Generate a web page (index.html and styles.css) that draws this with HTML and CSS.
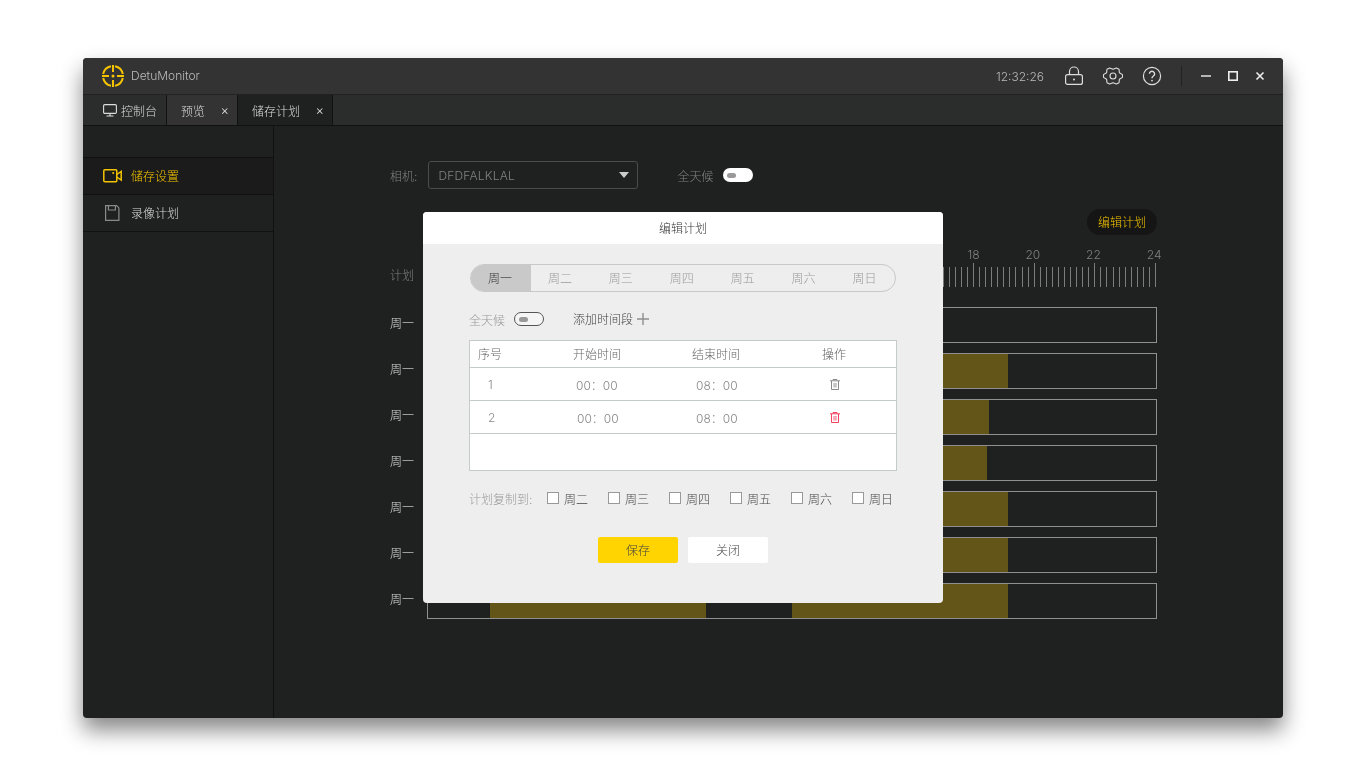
FILE: index.html
```html
<!DOCTYPE html>
<html lang="zh-CN">
<head>
    <meta charset="UTF-8">
    <title>DetuMonitor</title>
    <link rel="stylesheet" href="styles.css">
</head>
<body>
<div class="window">
    <!-- title bar -->
    <header class="titlebar">
        <svg class="logo" width="22" height="22" viewBox="0 0 22 22" fill="none" stroke="#f5c400" stroke-width="2">
            <path d="M9 1.2A10 10 0 0 0 1.2 9M13 1.2A10 10 0 0 1 20.8 9M1.2 13A10 10 0 0 0 9 20.8M20.8 13A10 10 0 0 1 13 20.8"/>
            <path d="M11 0V7M11 15V22M0 11H7M15 11H22"/>
            <circle cx="11" cy="11" r="1.5" fill="#f5c400" stroke="none"/>
        </svg>
        <span class="app-name">DetuMonitor</span>
        <span class="clock">12:32:26</span>
        <svg class="tool" width="20" height="20" viewBox="0 0 20 20" fill="none" stroke="#ddd" stroke-width="1.2">
            <rect x="1.6" y="8.6" width="16.8" height="9.8" rx="2"/>
            <path d="M5.5 8.5V5.5a4.5 4.5 0 0 1 9 0v3"/>
            <circle cx="10" cy="13.5" r="1" fill="#ddd" stroke="none"/>
        </svg>
        <svg class="tool" width="20" height="20" viewBox="0 0 20 20" fill="none" stroke="#ddd" stroke-width="1.1" stroke-linejoin="round">
            <path d="M19.5 8.65V11.35L16.4 13.33 16 16.7 13.4 18.07 10 16.66 6.6 18.07 4 16.7 3.6 13.33 .5 11.35V8.65L3.6 6.67 4 3.3 6.6 1.93 10 3.34 13.4 1.93 16 3.3 16.4 6.67z"/>
            <circle cx="10" cy="10" r="3"/>
        </svg>
        <svg class="tool" width="20" height="20" viewBox="0 0 20 20" fill="none" stroke="#ddd" stroke-width="1.2">
            <circle cx="10" cy="10" r="8.6"/>
            <path d="M7.4 7.8a2.6 2.6 0 1 1 4 2.2c-.9.6-1.4 1-1.4 2.2" stroke-width="1.4"/>
            <circle cx="10" cy="14.6" r=".9" fill="#ddd" stroke="none"/>
        </svg>
        <i class="divider"></i>
        <svg class="win-btn" width="10" height="10" viewBox="0 0 10 10" fill="none" stroke="#eee" stroke-width="1.4"><path d="M0 5H10"/></svg>
        <svg class="win-btn" width="10" height="10" viewBox="0 0 10 10" fill="none" stroke="#eee" stroke-width="1.6"><rect x=".8" y=".8" width="8.4" height="8.4"/></svg>
        <svg class="win-btn" width="10" height="10" viewBox="0 0 10 10" fill="none" stroke="#eee" stroke-width="1.6"><path d="M1.5 1.5L8.5 8.5M8.5 1.5L1.5 8.5"/></svg>
    </header>

    <!-- tabs -->
    <nav class="tabs">
        <div class="tab tab-home">
            <svg width="14" height="14" viewBox="0 0 14 14" fill="none" stroke="#ddd" stroke-width="1.1">
                <rect x=".6" y="1.6" width="12.8" height="8.8" rx="1.2"/>
                <path d="M7 10.5V13M3.5 13H10.5"/>
            </svg>
            控制台
        </div>
        <div class="tab tab-preview">预览<span class="tab-close">×</span></div>
        <div class="tab tab-plan">储存计划<span class="tab-close">×</span></div>
    </nav>

    <div class="body">
        <aside class="sidebar">
            <div class="side-item side-item-active">
                <svg width="19" height="14" viewBox="0 0 19 14" fill="none" stroke="#f5c400" stroke-width="1.5">
                    <rect x=".8" y=".8" width="13" height="12" rx="1"/>
                    <path d="M13.8 5.5L18.2 2.5V11L13.8 8"/>
                    <circle cx="10.2" cy="4" r="1" fill="#f5c400" stroke="none"/>
                </svg>
                <span class="side-label">储存设置</span>
            </div>
            <div class="side-item">
                <svg width="19" height="16" viewBox="0 0 19 16" fill="none" stroke="#8a8a8a" stroke-width="1.2">
                    <path d="M2.6.6H13.6L15.9 2.9V15.4H2.6z"/>
                    <path d="M5.4.8V5H12.4V.8"/>
                </svg>
                <span class="side-label">录像计划</span>
            </div>
        </aside>

        <main class="panel">
            <div class="filter-row">
                <span class="muted">相机:</span>
                <div class="select">DFDFALKLAL<i class="caret"></i></div>
                <span class="muted allday">全天候</span>
                <span class="toggle toggle-light"><i></i></span>
            </div>
            <div class="edit-row"><span class="edit-btn">编辑计划</span></div>
            <div class="ruler-row">
                <span class="muted ruler-title">计划</span>
                <div class="ruler">
                    <div class="hours"><span>18</span><span>20</span><span>22</span><span>24</span></div>
                    <div class="ticks"></div>
                </div>
            </div>
            <div class="rows">
                <div class="row"><span>周一</span><div class="track"></div></div>
                <div class="row"><span>周一</span><div class="track"><i class="fill" style="left:363px;width:217px"></i></div></div>
                <div class="row"><span>周一</span><div class="track"><i class="fill" style="left:363px;width:198px"></i></div></div>
                <div class="row"><span>周一</span><div class="track"><i class="fill" style="left:363px;width:196px"></i></div></div>
                <div class="row"><span>周一</span><div class="track"><i class="fill" style="left:363px;width:217px"></i></div></div>
                <div class="row"><span>周一</span><div class="track"><i class="fill" style="left:363px;width:217px"></i></div></div>
                <div class="row"><span>周一</span><div class="track"><i class="fill" style="left:62px;width:216px"></i><i class="fill" style="left:364px;width:216px"></i></div></div>
            </div>
        </main>
    </div>

    <!-- edit dialog -->
    <section class="dialog">
        <h2 class="dialog-title">编辑计划</h2>
        <div class="dialog-body">
            <div class="days">
                <span class="day day-active">周一</span>
                <span class="day">周二</span>
                <span class="day">周三</span>
                <span class="day">周四</span>
                <span class="day">周五</span>
                <span class="day">周六</span>
                <span class="day">周日</span>
            </div>
            <div class="add-row">
                <span class="grey">全天候</span>
                <span class="toggle toggle-outline"><i></i></span>
                <span class="add-time">添加时间段</span>
                <svg width="12" height="12" viewBox="0 0 12 12" stroke="#8e8e8e" stroke-width="1.4"><path d="M6 0V12M0 6H12"/></svg>
            </div>
            <div class="table">
                <div class="tr tr-head">
                    <span class="seq">序号</span><span>开始时间</span><span>结束时间</span><span>操作</span>
                </div>
                <div class="tr">
                    <span class="num">1</span><span class="time">00：00</span><span class="time">08：00</span>
                    <span><svg class="trash" width="10" height="11" viewBox="0 0 10 11" fill="none" stroke="#8a8a8a" stroke-width="1"><path d="M0 1.8H10M3 1.5V.5H7V1.5M1.5 2V10.5H8.5V2"/><rect x="3.2" y="4" width="3.6" height="4.5" fill="#c4c4c4" stroke="none"/></svg></span>
                </div>
                <div class="tr">
                    <span class="num">2</span><span class="time time-shift">00：00</span><span class="time">08：00</span>
                    <span><svg class="trash" width="10" height="11" viewBox="0 0 10 11" fill="none" stroke="#f5405f" stroke-width="1"><path d="M0 1.8H10M3 1.5V.5H7V1.5M1.5 2V10.5H8.5V2"/><rect x="3.2" y="4" width="3.6" height="4.5" fill="#fba4b2" stroke="none"/></svg></span>
                </div>
            </div>
            <div class="copy-row">
                <span class="grey copy-label">计划复制到:</span>
                <label class="check"><i></i>周二</label>
                <label class="check"><i></i>周三</label>
                <label class="check"><i></i>周四</label>
                <label class="check"><i></i>周五</label>
                <label class="check"><i></i>周六</label>
                <label class="check"><i></i>周日</label>
            </div>
            <div class="actions">
                <button class="btn btn-save">保存</button>
                <button class="btn">关闭</button>
            </div>
        </div>
    </section>
</div>
</body>
</html>
```

FILE: styles.css
```css
* {
    box-sizing: border-box;
}

body {
    margin: 0;
    height: 768px;
    padding: 58px 83px 0;
    overflow: hidden;
    background-color: #fff;
    font-family: Inter, "Noto Sans CJK SC", sans-serif;
    font-size: 12px;
    font-weight: 300;
    color: #ccc;
}

.window {
    position: relative;
    width: 1200px;
    height: 660px;
    display: flex;
    flex-direction: column;
    border-radius: 4px;
    background-color: #1f2120;
    box-shadow: 0 12px 22px rgba(0, 0, 0, 0.48);
    will-change: transform;
}

/* title bar */
.titlebar {
    height: 37px;
    flex: none;
    display: flex;
    align-items: center;
    padding: 0 18px 0 19px;
    background-color: #333;
    border-bottom: 1px solid #222;
    border-radius: 4px 4px 0 0;
}

.app-name {
    margin-left: 7px;
    margin-bottom: 1px;
    color: #bbb;
}

.clock {
    margin-left: auto;
    color: #bbb;
}

.tool {
    margin-left: 19px;
}

.clock + .tool {
    margin-left: 20px;
}

.divider {
    width: 1px;
    height: 20px;
    margin: 0 19px;
    background-color: #222;
}

.win-btn {
    margin-right: 17px;
}

.win-btn:last-child {
    margin-right: 0;
}

/* tabs */
.tabs {
    height: 31px;
    flex: none;
    display: flex;
    background-color: #2b2d2c;
    border-bottom: 1px solid #111;
}

.tab {
    display: flex;
    align-items: center;
    padding-left: 14px;
    color: #ddd;
    border-right: 1px solid #111;
}

.tab-home {
    width: 84px;
    padding-left: 20px;
    gap: 4px;
}

.tab-preview {
    width: 71px;
    background-color: #333;
}

.tab-plan {
    width: 95px;
    background-color: #1f2120;
}

.tab-close {
    margin-left: auto;
    margin-right: 8px;
    font-size: 13px;
    color: #ddd;
}

.body {
    flex: 1;
    display: flex;
    min-height: 0;
}

/* sidebar */
.sidebar {
    width: 191px;
    flex: none;
    padding-top: 31px;
    border-right: 1px solid #111;
}

.side-item {
    height: 37px;
    display: flex;
    align-items: center;
    gap: 9px;
    padding-left: 20px;
    color: #ddd;
    border-bottom: 1px solid #111;
}

.side-label {
    margin-bottom: 1px;
}

.side-item-active {
    color: #f5c400;
    background-color: #1a1b1a;
    border-top: 1px solid #111;
    height: 38px;
}

/* main panel */
.panel {
    flex: 1;
    padding: 35px 126px 0 116px;
}

.muted {
    color: #808080;
}

.filter-row {
    height: 28px;
    display: flex;
    align-items: center;
}

.select {
    position: relative;
    width: 210px;
    height: 28px;
    margin-left: 11px;
    padding-left: 9px;
    line-height: 28px;
    letter-spacing: 0.2px;
    color: #808080;
    border: 1px solid #4a4c4b;
    border-radius: 3px;
}

.caret {
    position: absolute;
    top: 10px;
    right: 8px;
    border-left: 5px solid transparent;
    border-right: 5px solid transparent;
    border-top: 6px solid #ccc;
}

.allday {
    margin-left: 39px;
    margin-right: 1px;
}

.toggle {
    width: 30px;
    height: 14px;
    margin-left: 9px;
    display: flex;
    align-items: center;
    padding-left: 4px;
    border-radius: 7px;
}

.toggle i {
    width: 9px;
    height: 5px;
    border-radius: 3px;
    background-color: #999;
}

.toggle-light {
    background-color: #fff;
}

.toggle-outline {
    border: 1px solid #555;
    background-color: #f5f5f5;
}

.edit-row {
    height: 26px;
    margin-top: 20px;
    display: flex;
    justify-content: flex-end;
}

.edit-btn {
    width: 70px;
    height: 26px;
    line-height: 28px;
    text-align: center;
    color: #f5c400;
    background-color: #141514;
    border-radius: 13px;
}

.ruler-row {
    height: 40px;
    margin-top: 12px;
    display: flex;
    justify-content: space-between;
}

.ruler-title {
    margin-top: 19px;
}

.ruler {
    width: 730px;
}

.hours {
    height: 16px;
    display: flex;
    justify-content: flex-end;
    margin-right: -4.5px;
    color: #808080;
}

.hours span {
    width: 60.67px;
    text-align: right;
}

.ticks {
    width: 729px;
    height: 24px;
    background:
        repeating-linear-gradient(to left, #7c7c7c 0 1px, transparent 1px 6.0667px) bottom / 100% 20px no-repeat,
        repeating-linear-gradient(to left, #7c7c7c 0 1px, transparent 1px 60.667px) bottom / 100% 24px no-repeat;
}

.rows {
    margin-top: 20px;
    display: flex;
    flex-direction: column;
    gap: 10px;
}

.row {
    height: 36px;
    display: flex;
    justify-content: space-between;
    color: #ddd;
}

.row span {
    line-height: 34px;
}

.track {
    position: relative;
    width: 730px;
    border: 1px solid #8f8f8f;
}

.fill {
    position: absolute;
    top: 0;
    bottom: 0;
    background-color: #635518;
}

/* dialog */
.dialog {
    position: absolute;
    left: 340px;
    top: 154px;
    width: 520px;
    height: 391px;
    border-radius: 4px;
    overflow: hidden;
    background-color: #eee;
    color: #666;
}

.dialog-title {
    height: 32px;
    margin: 0;
    line-height: 33px;
    text-align: center;
    font-size: 12px;
    font-weight: 300;
    color: #333;
    background-color: #fff;
}

.dialog-body {
    padding: 20px 46px 0;
}

.days {
    width: 426px;
    height: 28px;
    margin-left: 1px;
    display: flex;
    border: 1px solid #c8c8c8;
    border-radius: 14px;
    overflow: hidden;
}

.day {
    width: 61px;
    line-height: 28px;
    text-align: center;
    color: #999;
}

.day-active {
    width: 60px;
    margin-right: -1.5px;
    padding-right: 2px;
    color: #333;
    background-color: #c9c9c9;
}

.add-row {
    height: 16px;
    margin-top: 19px;
    display: flex;
    align-items: center;
}

.grey {
    color: #999;
}

.add-time {
    margin-left: 29px;
    margin-right: 4px;
    margin-bottom: 2px;
    color: #444;
}

.table {
    width: 428px;
    height: 131px;
    margin-top: 13px;
    border: 1px solid #c5cbc9;
    background-color: #fff;
}

.tr {
    height: 33px;
    display: grid;
    grid-template-columns: 96px 119px 130px 1fr;
    align-items: center;
    padding-left: 7px;
    color: #888;
    border-bottom: 1px solid #c5cbc9;
}

.tr-head {
    height: 27px;
    padding-bottom: 2px;
    color: #666;
}

.seq {
    padding-left: 1px;
}

.num {
    padding-left: 11px;
}

.time {
    padding-left: 3px;
}

.time + .time {
    padding-left: 4px;
}

.time-shift {
    padding-left: 4px;
}

.trash {
    display: block;
    margin-left: 8px;
}

.copy-row {
    height: 16px;
    margin-top: 19px;
    display: flex;
    align-items: center;
}

.copy-label {
    width: 78px;
    flex: none;
}

.check {
    width: 61px;
    flex: none;
    display: flex;
    align-items: center;
    gap: 5px;
    color: #444;
}

.check i {
    width: 12px;
    height: 12px;
    background-color: #fff;
    border: 1px solid #999;
}

.actions {
    margin-top: 31px;
    display: flex;
    justify-content: center;
    gap: 10px;
}

.btn {
    width: 80px;
    height: 26px;
    padding: 0 0 2px;
    border: none;
    border-radius: 2px;
    font: inherit;
    color: #444;
    background-color: #fff;
}

.btn-save {
    background-color: #ffd400;
}
```
